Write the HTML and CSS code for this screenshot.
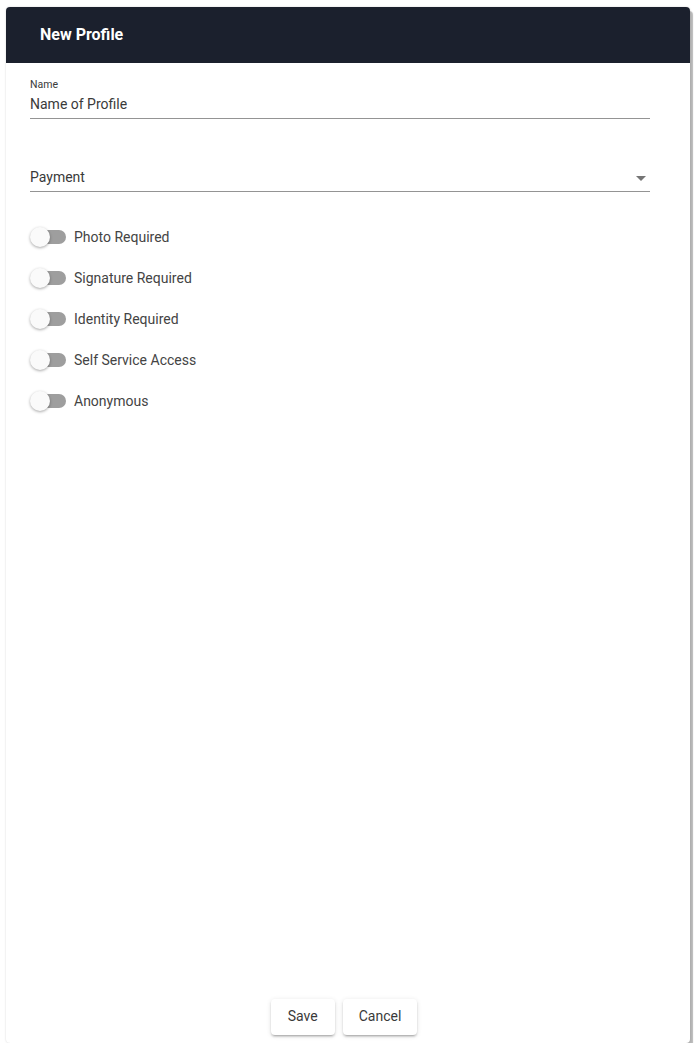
FILE: index.html
```html
<!DOCTYPE html>
<html>
<head>
<meta charset="utf-8">
<link rel="stylesheet" href="styles.css">
</head>
<body>
<div class="card">
  <div class="card-header">New Profile</div>
  <div class="card-body">
    <div class="field">
      <div class="field-label">Name</div>
      <div class="field-input">Name of Profile</div>
    </div>
    <div class="field select">
      <div class="field-input">Payment<span class="caret"></span></div>
    </div>
    <div class="toggles">
      <div class="toggle-row"><span class="switch"><span class="track"></span><span class="thumb"></span></span><span class="toggle-label">Photo Required</span></div>
      <div class="toggle-row"><span class="switch"><span class="track"></span><span class="thumb"></span></span><span class="toggle-label">Signature Required</span></div>
      <div class="toggle-row"><span class="switch"><span class="track"></span><span class="thumb"></span></span><span class="toggle-label">Identity Required</span></div>
      <div class="toggle-row"><span class="switch"><span class="track"></span><span class="thumb"></span></span><span class="toggle-label">Self Service Access</span></div>
      <div class="toggle-row"><span class="switch"><span class="track"></span><span class="thumb"></span></span><span class="toggle-label">Anonymous</span></div>
    </div>
  </div>
  <div class="card-actions">
    <button class="btn">Save</button>
    <button class="btn">Cancel</button>
  </div>
</div>
</body>
</html>
```

FILE: styles.css
```css
html, body {
  margin: 0;
  padding: 0;
  background: #ffffff;
  font-family: Roboto, "Liberation Sans", sans-serif;
}
.card {
  margin: 7px 0 0 6px;
  width: 684px;
  height: 1036px;
  background: #ffffff;
  border-radius: 4px;
  box-shadow: 0 0 2px rgba(0,0,0,0.18), 3px 4px 1px rgba(0,0,0,0.28);
  display: flex;
  flex-direction: column;
}
.card-header {
  height: 56px;
  flex: none;
  background: #1b202d;
  color: #ffffff;
  font-size: 16px;
  font-weight: 700;
  line-height: 56px;
  padding-left: 34px;
  border-radius: 4px 4px 0 0;
}
.card-body {
  flex: 1;
  padding: 15px 40px 0 24px;
}
.field-label {
  font-size: 10.5px;
  line-height: 14px;
  color: #3a3a3a;
}
.field-input {
  position: relative;
  font-size: 14px;
  line-height: 24px;
  color: #3a3a3a;
  padding-bottom: 2px;
  border-bottom: 1px solid #949494;
}
.field.select {
  margin-top: 46px;
}
.caret {
  position: absolute;
  right: 4px;
  top: 11px;
  width: 0;
  height: 0;
  border-left: 5px solid transparent;
  border-right: 5px solid transparent;
  border-top: 5px solid #757575;
}
.toggles {
  margin-top: 35px;
  display: flex;
  flex-direction: column;
  gap: 21px;
}
.toggle-row {
  display: flex;
  align-items: center;
  height: 20px;
}
.switch {
  position: relative;
  width: 36px;
  height: 20px;
  flex: none;
  margin-right: 8px;
}
.track {
  position: absolute;
  left: 6px;
  top: 3px;
  width: 30px;
  height: 14px;
  border-radius: 7px;
  background: #9e9e9e;
}
.thumb {
  position: absolute;
  left: 0;
  top: 0;
  width: 20px;
  height: 20px;
  border-radius: 50%;
  background: #fafafa;
  box-shadow: 0 1px 3px rgba(0,0,0,0.35);
}
.toggle-label {
  font-size: 14px;
  color: #444444;
}
.card-actions {
  flex: none;
  display: flex;
  justify-content: center;
  gap: 8px;
  padding: 0 8px 8px 0;
}
.btn {
  height: 36px;
  min-width: 64px;
  padding: 0 16px 2px;
  border: none;
  border-radius: 4px;
  background: #ffffff;
  color: #3a3a3a;
  font-family: Roboto, "Liberation Sans", sans-serif;
  font-size: 14px;
  line-height: 32px;
  box-shadow: 0 2px 2px rgba(0,0,0,0.14), 0 1px 5px rgba(0,0,0,0.12), 0 3px 1px -2px rgba(0,0,0,0.12);
}
```
